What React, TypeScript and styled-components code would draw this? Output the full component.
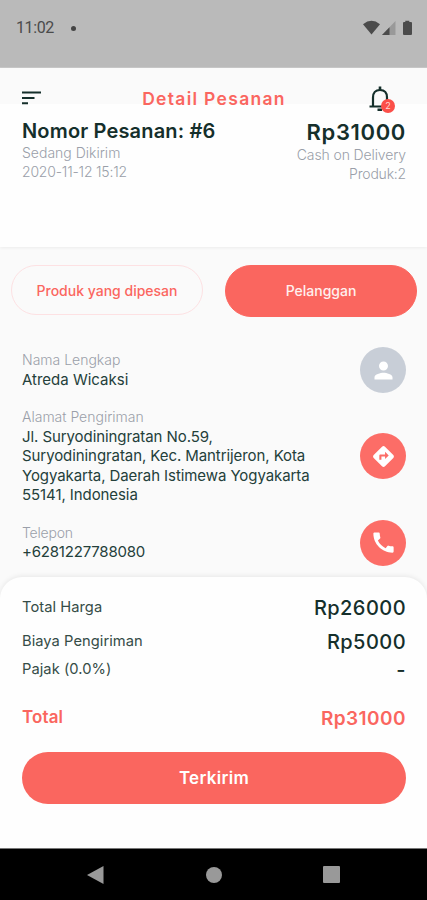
import React from "react";
import styled, { createGlobalStyle } from "styled-components";
import { MdCall, MdDirections, MdPerson } from "react-icons/md";

const coral = "#fa665f";
const ink = "#152f2b";

const GlobalStyle = createGlobalStyle`
  * { box-sizing: border-box; }
  body { margin: 0; background: #fafafa; font-family: Inter, sans-serif; }
`;

const Screen = styled.div`
  width: 427px;
  height: 900px;
  display: flex;
  flex-direction: column;
  overflow: hidden;
  background: #fafafa;
  color: ${ink};
`;

const StatusBar = styled.div`
  height: 68px;
  flex: none;
  display: flex;
  align-items: center;
  justify-content: space-between;
  padding: 0 14px 11px 16px;
  background: #bababa;
  border-bottom: 1px solid #c8c8c8;
  color: #4b4b4b;
  font-family: Roboto, sans-serif;
  font-size: 16px;
  line-height: 18px;
  letter-spacing: -0.4px;
`;

const Clock = styled.div`
  display: flex;
  align-items: center;
  gap: 17px;
`;

const Dot = styled.i`
  width: 5px;
  height: 5px;
  border-radius: 50%;
  background: #444;
`;

/* The app bar's grey tint ends part-way down, behind the title row. */
const OrderHeader = styled.header`
  height: 179px;
  flex: none;
  background: linear-gradient(#fafafa 36px, #fefefe 36px);
  box-shadow: 0 1px 3px rgba(0, 0, 0, 0.06);
`;

const AppBar = styled.div`
  height: 49px;
  display: grid;
  grid-template-columns: 60px 1fr 60px;
  padding: 17px 0 0 22px;
`;

const Title = styled.h1`
  margin: 4px 0 0;
  padding-right: 21px;
  text-align: center;
  color: ${coral};
  font-size: 17.5px;
  font-weight: 600;
  line-height: 20px;
  letter-spacing: 1.3px;
`;

const MenuIcon = styled.svg`
  display: block;
  margin-top: 6px;
`;

const Bell = styled.div`
  position: relative;
  width: 26px;
  height: 28px;
  margin-left: 1px;
  svg { display: block; }
`;

const Badge = styled.span`
  position: absolute;
  left: 13px;
  top: 14px;
  width: 14px;
  height: 14px;
  border-radius: 50%;
  background: #fb4f49;
  color: #ffd9d6;
  font-size: 9px;
  line-height: 14px;
  text-align: center;
`;

const Summary = styled.div`
  display: flex;
  justify-content: space-between;
  padding: 2px 21px 0 22px;
`;

const Column = styled.div<{ $end?: boolean }>`
  display: flex;
  flex-direction: column;
  align-items: ${(p) => (p.$end ? "flex-end" : "flex-start")};
`;

const Headline = styled.div<{ $size: number; $track: number }>`
  height: ${(p) => p.$size + 5}px;
  line-height: ${(p) => p.$size + 4}px;
  font-size: ${(p) => p.$size}px;
  letter-spacing: ${(p) => p.$track}px;
  font-weight: 600;
`;

const Muted = styled.div<{ $track?: number }>`
  color: #9a9fa9;
  font-size: 14px;
  font-weight: 300;
  line-height: 18.5px;
  letter-spacing: ${(p) => p.$track ?? 0}px;
`;

const Tabs = styled.div`
  height: 71px;
  flex: none;
  display: flex;
  align-items: flex-start;
  justify-content: space-between;
  padding: 18px 10px 0 11px;
`;

const Tab = styled.button<{ $active?: boolean }>`
  width: 192px;
  height: ${(p) => (p.$active ? 52 : 50)}px;
  padding: 0 0 ${(p) => (p.$active ? 2 : 0)}px;
  border: 1px solid ${(p) => (p.$active ? coral : "#fde1e3")};
  border-radius: 26px;
  background: ${(p) => (p.$active ? coral : "transparent")};
  color: ${(p) => (p.$active ? "#fff0ee" : coral)};
  font: 500 14px Inter, sans-serif;
`;

const Details = styled.section`
  flex: none;
  height: 259px;
  display: flex;
  flex-direction: column;
  gap: 15px;
  padding: 29px 21px 0 22px;
`;

const Row = styled.div`
  display: flex;
  align-items: center;
  justify-content: space-between;
`;

const Value = styled.div<{ $track?: number }>`
  width: 300px;
  color: #24403a;
  font-size: 15px;
  line-height: 19.5px;
  letter-spacing: ${(p) => p.$track ?? -0.08}px;
  white-space: pre-line;
`;

const RoundButton = styled.button<{ $idle?: boolean }>`
  width: 46px;
  height: 46px;
  padding: 0;
  border: 0;
  border-radius: 50%;
  display: grid;
  place-items: center;
  background: ${(p) => (p.$idle ? "#c8ced7" : "#fc6d67")};
  color: #fff;
`;

const Sheet = styled.section`
  flex: 1;
  display: flex;
  flex-direction: column;
  padding: 19px 21px 0 22px;
  border-radius: 22px 22px 0 0;
  background: #fefefe;
  box-shadow: 0 -1px 5px rgba(0, 0, 0, 0.08);
`;

const Line = styled.div<{ $height: number; $total?: boolean }>`
  height: ${(p) => p.$height}px;
  display: flex;
  align-items: flex-start;
  justify-content: space-between;
  color: ${(p) => (p.$total ? coral : "inherit")};
`;

const LineLabel = styled.span<{ $total?: boolean }>`
  font-size: ${(p) => (p.$total ? 17 : 14.7)}px;
  font-weight: ${(p) => (p.$total ? 600 : 400)};
  line-height: 23px;
  letter-spacing: ${(p) => (p.$total ? 0.1 : 0.05)}px;
  color: ${(p) => (p.$total ? coral : "#354c47")};
`;

const Amount = styled.span<{ $total?: boolean }>`
  font-size: ${(p) => (p.$total ? 19 : 20)}px;
  font-weight: ${(p) => (p.$total ? 600 : 500)};
  line-height: 25px;
  letter-spacing: 0.45px;
`;

const Submit = styled.button`
  height: 52px;
  flex: none;
  padding: 0;
  border: 0;
  border-radius: 26px;
  background: ${coral};
  color: #fff;
  font: 600 17px Inter, sans-serif;
  letter-spacing: 0.3px;
`;

const NavBar = styled.nav`
  height: 52px;
  flex: none;
  display: flex;
  align-items: center;
  justify-content: space-between;
  padding: 0 87px;
  border-top: 1px solid #777;
  background: #000;
  svg { display: block; }
`;

export default function App() {
  return (
    <Screen>
      <GlobalStyle />
      <StatusBar>
        <Clock>11:02<Dot /></Clock>
        <svg width="50" height="16" viewBox="0 0 50 16">
          <path d="M0 4.2Q8.500-2.700 17 4.200L8.500 14.500Z" fill="#4b4b4b" />
          <path d="M32.500 1V15H19Z" fill="#999" />
          <path d="M26.500 7.200V15H19Z" fill="#4b4b4b" />
          <path d="M40 3Q40 2 41 2H42.300V.8H46.300V2H48Q49 2 49 3V14Q49 15 48 15H41Q40 15 40 14Z" fill="#4b4b4b" />
        </svg>
      </StatusBar>

      <OrderHeader>
        <AppBar>
          <MenuIcon width="20" height="14" viewBox="0 0 20 14" stroke={ink} strokeWidth="2">
            <path d="M0 1.500H19M0 7H12.500M0 12.300H6" />
          </MenuIcon>
          <Title>Detail Pesanan</Title>
          <Bell>
            <svg width="24" height="27" viewBox="0 0 24 27" fill="none" stroke={ink} strokeWidth="2.2">
              <path d="M1.500 21.500H21.500M5 21V12.500C5 8 7.500 5 12 5S19 8 19 12.500V21" />
              <path d="M12 1.500V5M9.500 24.800H14" strokeWidth="2.600" />
            </svg>
            <Badge>2</Badge>
          </Bell>
        </AppBar>
        <Summary>
          <Column>
            <Headline $size={20} $track={0.17}>Nomor Pesanan: #6</Headline>
            <Muted>Sedang Dikirim</Muted>
            <Muted $track={-0.2}>2020-11-12 15:12</Muted>
          </Column>
          <Column $end>
            <Headline $size={22} $track={0.65}>Rp31000</Headline>
            <Muted $track={-0.12}>Cash on Delivery</Muted>
            <Muted $track={-0.2}>Produk:2</Muted>
          </Column>
        </Summary>
      </OrderHeader>

      <Tabs>
        <Tab>Produk yang dipesan</Tab>
        <Tab $active>Pelanggan</Tab>
      </Tabs>

      <Details>
        <Row>
          <div>
            <Muted>Nama Lengkap</Muted>
            <Value $track={0}>Atreda Wicaksi</Value>
          </div>
          <RoundButton $idle><MdPerson size={27} /></RoundButton>
        </Row>
        <Row>
          <div>
            <Muted>Alamat Pengiriman</Muted>
            <Value>{"Jl. Suryodiningratan No.59,\nSuryodiningratan, Kec. Mantrijeron, Kota\nYogyakarta, Daerah Istimewa Yogyakarta\n55141, Indonesia"}</Value>
          </div>
          <RoundButton><MdDirections size={25} /></RoundButton>
        </Row>
        <Row>
          <div>
            <Muted $track={-0.2}>Telepon</Muted>
            <Value $track={-0.2}>+6281227788080</Value>
          </div>
          <RoundButton><MdCall size={27} /></RoundButton>
        </Row>
      </Details>

      <Sheet>
        <Line $height={34}><LineLabel>Total Harga</LineLabel><Amount>Rp26000</Amount></Line>
        <Line $height={28}><LineLabel>Biaya Pengiriman</LineLabel><Amount>Rp5000</Amount></Line>
        <Line $height={48}><LineLabel>Pajak (0.0%)</LineLabel><Amount>-</Amount></Line>
        <Line $height={46} $total><LineLabel $total>Total</LineLabel><Amount $total>Rp31000</Amount></Line>
        <Submit>Terkirim</Submit>
      </Sheet>

      <NavBar>
        <svg width="17" height="20" viewBox="0 0 17 20"><path d="M0 10L16.500 1V19Z" fill="#999" /></svg>
        <svg width="16" height="16" viewBox="0 0 16 16"><circle cx="8" cy="8" r="8" fill="#999" /></svg>
        <svg width="17" height="17" viewBox="0 0 17 17"><rect width="17" height="17" rx="1" fill="#999" /></svg>
      </NavBar>
    </Screen>
  );
}
